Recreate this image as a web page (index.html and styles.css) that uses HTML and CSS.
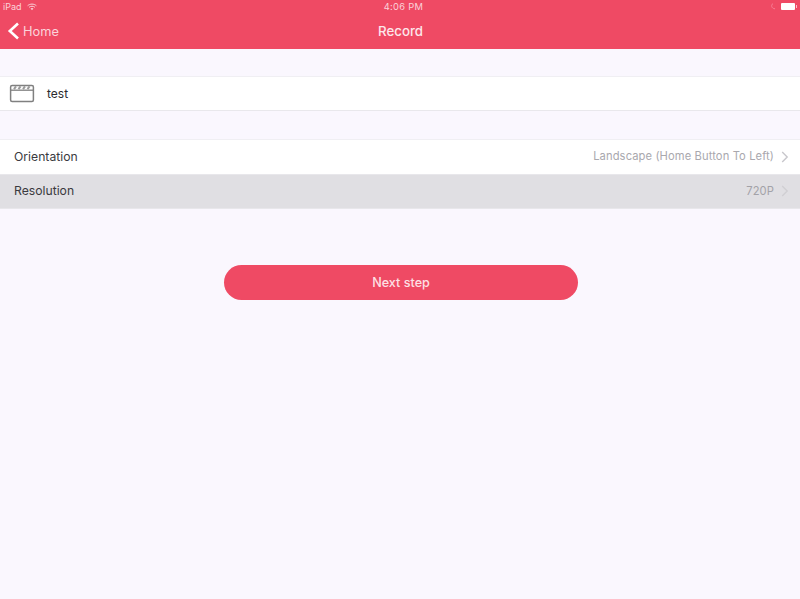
FILE: index.html
```html
<!DOCTYPE html>
<html lang="en">
<head>
<meta charset="utf-8">
<title>Record</title>
<link rel="stylesheet" href="styles.css">
</head>
<body>
<header class="header">
  <div class="status">
    <div class="status-left">
      <span>iPad</span>
      <svg class="wifi" width="10" height="8" viewBox="0 0 11 8"><path d="M0.7 2.6C3.4 0.2 7.6 0.2 10.3 2.6M2.3 4.3C4 2.8 7 2.8 8.7 4.3" fill="none" stroke="#fbd3da" stroke-width="1.1"/><path d="M3.9 5.7C4.8 4.9 6.2 4.9 7.1 5.7L5.5 7.5Z" fill="#fbd3da"/></svg>
    </div>
    <span class="clock">4:06 PM</span>
    <div class="status-right">
      <svg class="moon" width="6" height="7" viewBox="0 0 6 7"><path d="M3 0.5C0.8 2 1.2 5.5 5 5.8" fill="none" stroke="#f77f96" stroke-width="1"/></svg>
      <span class="battery"></span>
      <span class="battery-tip"></span>
    </div>
  </div>
  <nav class="nav">
    <a class="back">
      <svg width="12" height="18" viewBox="0 0 12 18"><path d="M11 1.5L2.8 9L11 16.5" fill="none" stroke="#fff" stroke-width="2.6"/></svg>
      <span>Home</span>
    </a>
    <h1 class="title">Record</h1>
  </nav>
</header>
<main class="main">
  <section class="name-row">
    <svg class="clapper" width="26" height="19" viewBox="0 0 26 19"><rect x="1.6" y="1.6" width="22.8" height="15.8" rx="1.5" fill="#fff" stroke="#808080" stroke-width="1.5"/><path d="M2 6.2H24" stroke="#808080" stroke-width="1.3"/><path d="M5 5.2L7 2.4M9.5 5.2L11.5 2.4M14 5.2L16 2.4M18.5 5.2L20.5 2.4" stroke="#9a9a9a" stroke-width="2"/></svg>
    <span class="name">test</span>
  </section>
  <section class="group">
    <div class="row">
      <span class="row-label">Orientation</span>
      <span class="row-value">Landscape (Home Button To Left)</span>
      <svg class="chev" width="8" height="12" viewBox="0 0 8 12"><path d="M1.2 1L6.2 6L1.2 11" fill="none" stroke="#c8c7cc" stroke-width="1.4"/></svg>
    </div>
    <div class="row selected">
      <span class="row-label">Resolution</span>
      <span class="row-value">720P</span>
      <svg class="chev" width="8" height="12" viewBox="0 0 8 12"><path d="M1.2 1L6.2 6L1.2 11" fill="none" stroke="#d0cfd3" stroke-width="1.4"/></svg>
    </div>
  </section>
  <div class="action">
    <button class="next">Next step</button>
  </div>
</main>
</body>
</html>
```
FILE: styles.css
```css
* { box-sizing: border-box; }
html, body { margin: 0; height: 100%; }
body {
  background: #faf7fe;
  font-family: Inter, "Liberation Sans", sans-serif;
  overflow: hidden;
}
.header {
  height: 49px;
  background: #ef4a64;
  color: #fff;
  display: flex;
  flex-direction: column;
}
.status {
  height: 13px;
  padding: 0 0 0 3px;
  display: grid;
  grid-template-columns: 1fr auto 1fr;
  align-items: center;
  font-size: 9px;
  color: #fbd3da;
}
.status-left { display: flex; align-items: center; gap: 5px; }
.clock { letter-spacing: 0.3px; font-size: 9.3px; margin-left: 4px; }
.status-right { display: flex; align-items: center; justify-content: flex-end; gap: 5px; padding-right: 3px; }
.battery {
  width: 14px;
  height: 7px;
  background: #fff;
  border-radius: 1px;
}
.battery-tip {
  width: 1px;
  height: 3px;
  margin-left: -4px;
  background: #f9c0cb;
}
.nav {
  flex: 1;
  position: relative;
  display: flex;
  align-items: center;
  justify-content: center;
  padding-bottom: 1px;
}
.back {
  position: absolute;
  left: 7px;
  top: 9px;
  display: flex;
  align-items: center;
  gap: 4px;
  font-size: 12.8px;
  color: #fbd3da;
}
.title {
  margin: 0 0 0 1px;
  font-size: 13.3px;
  font-weight: 500;
  color: #fde6ea;
}
.main { display: flex; flex-direction: column; }
.name-row {
  margin-top: 27px;
  height: 35px;
  background: #fff;
  border-top: 1px solid #f0eff3;
  border-bottom: 1px solid #e9e8ec;
  display: flex;
  align-items: center;
  padding-left: 9px;
  gap: 12px;
}
.name { font-size: 12px; color: #2b2b2f; }
.group {
  margin-top: 28px;
  display: flex;
  flex-direction: column;
}
.row {
  height: 35px;
  background: #fff;
  display: flex;
  align-items: center;
  padding: 0 11px 2px 14px;
  border-top: 1px solid #f0eff3;
}
.row .chev { margin-top: 1px; }
.row-label { font-size: 12.2px; color: #3a3a40; flex: 1; }
.row-value { font-size: 11.2px; color: #a9a8ae; margin-right: 7px; letter-spacing: 0.1px; }
.selected { background: #e0dfe3; border-top-color: #e8e7eb; border-bottom: 1px solid #e8e7eb; padding-bottom: 2px; }
.selected .row-value { color: #a3a2a8; }
.action { display: flex; justify-content: center; margin-top: 56px; padding-left: 2px; }
.next {
  width: 354px;
  height: 35px;
  border: 0;
  border-radius: 18px;
  background: #ef4a64;
  color: #fde0e5;
  font-family: inherit;
  font-size: 12.6px;
  font-weight: 500;
  padding: 0 0 1px;
}
```
